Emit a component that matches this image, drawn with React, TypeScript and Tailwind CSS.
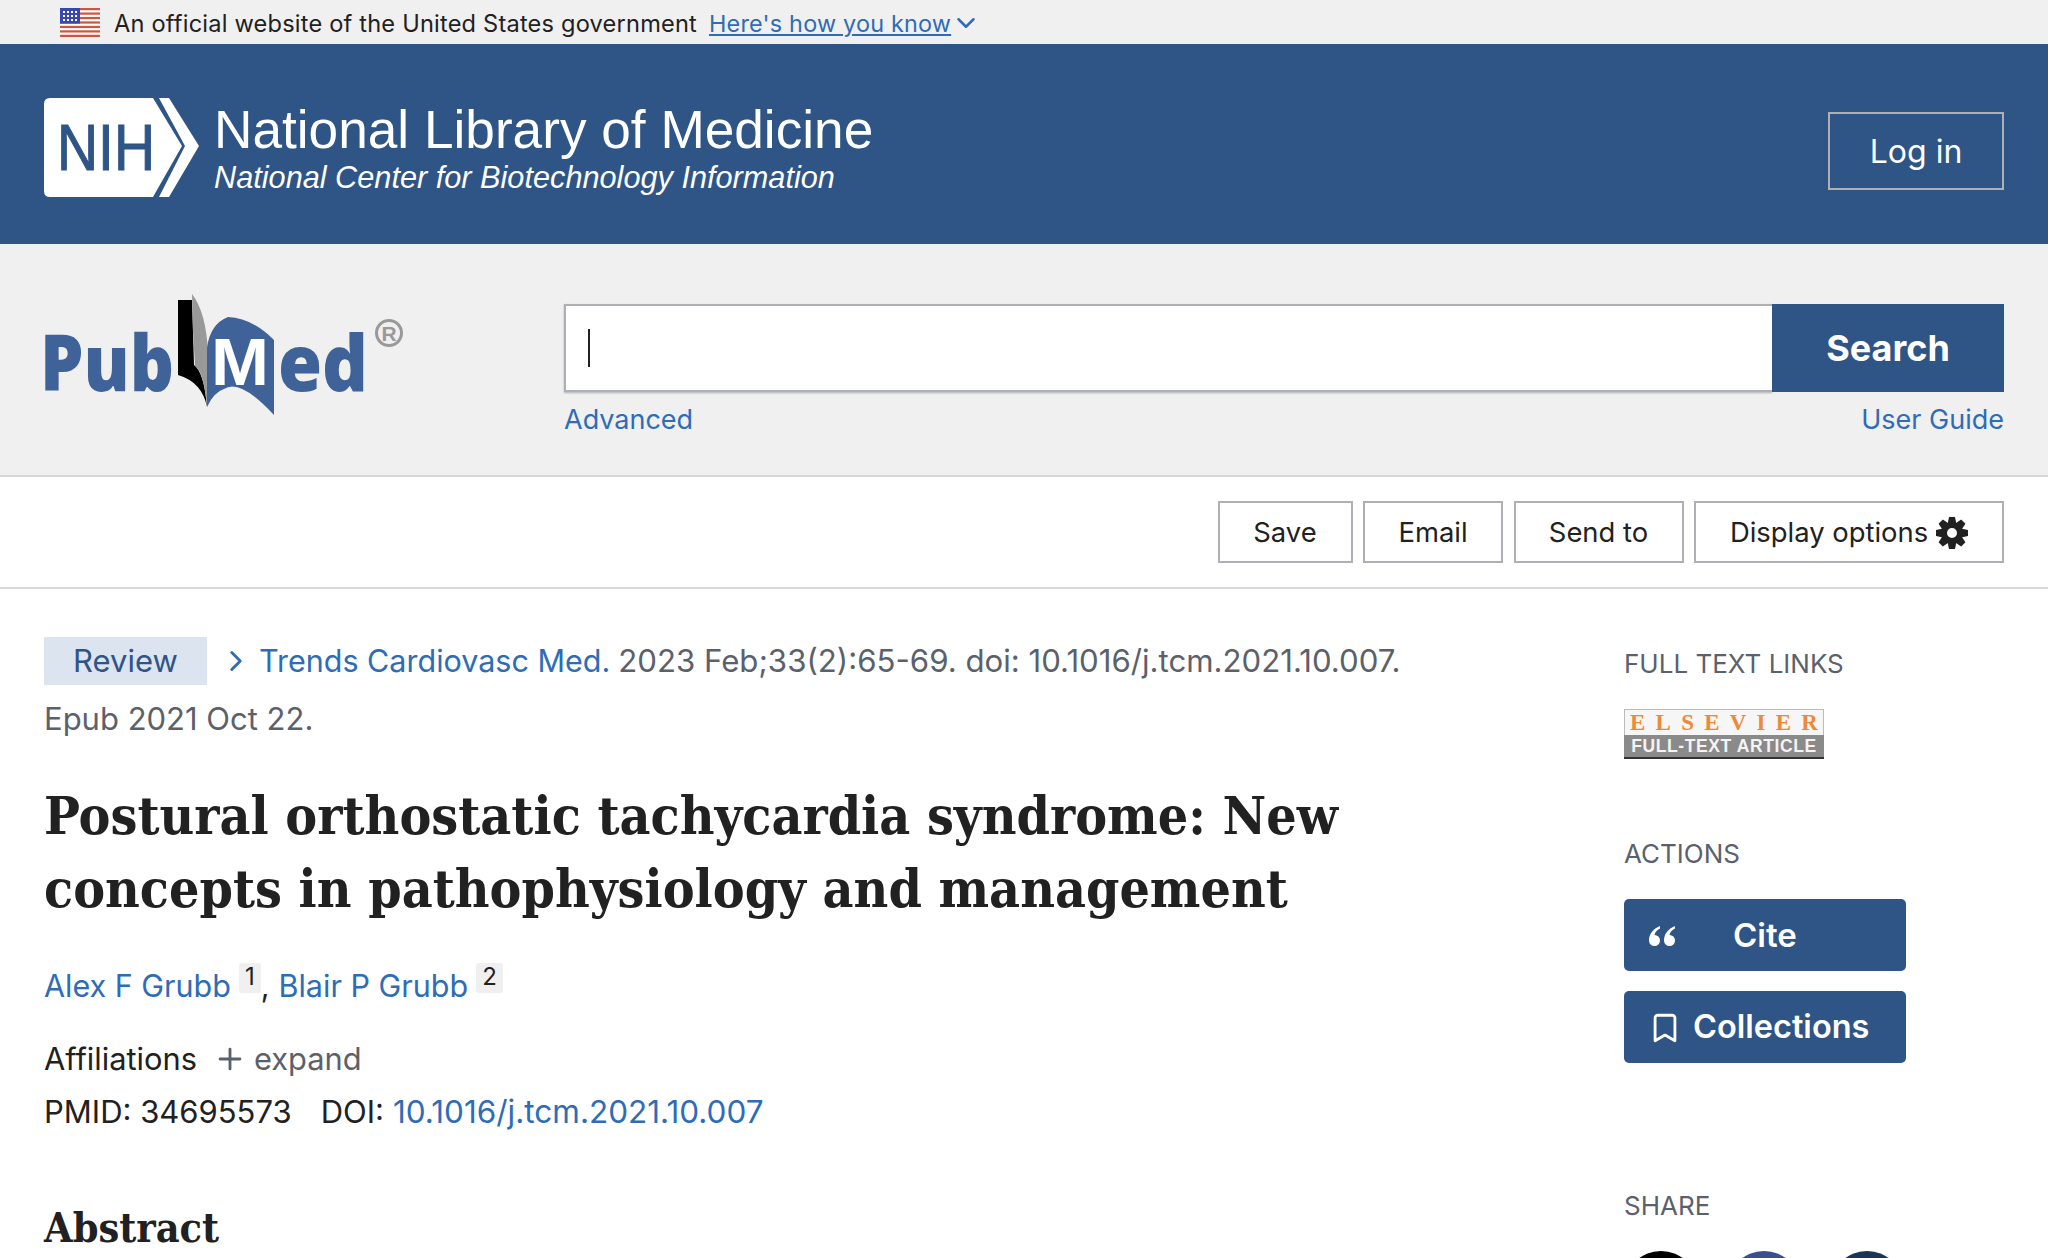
import React from "react";
import { ChevronRight, ChevronDown, Plus, Bookmark } from "lucide-react";

function Flag() {
  return (
    <svg width="40" height="29" viewBox="0 0 40 29" className="shrink-0">
      <rect width="40" height="29" fill="#fff" />
      {[0, 2, 4, 6, 8, 10, 12].map((i) => (
        <rect key={i} y={i * 2.23} width="40" height="2.23" fill="#d0543e" />
      ))}
      <rect width="20" height="15.6" fill="#3a47b0" />
      {[3, 7, 11].map((y) => [3, 7, 11, 15].map((x) => <rect key={`${x}-${y}`} x={x} y={y} width="2" height="2" fill="#fff" />))}
    </svg>
  );
}

function NihLogo() {
  return (
    <svg width="156" height="100" viewBox="0 0 156 100" className="shrink-0">
      <path d="M6 0H109L138 48L109 99H6Q0 99 0 93V6Q0 0 6 0Z" fill="#fff" />
      <path d="M115 0H125L155 48L125 99H115L141 48Z" fill="#fff" />
      <text x="13" y="72" fontFamily="'Liberation Sans', sans-serif" fontWeight="400" fontSize="64" fill="#2f5486" stroke="#2f5486" strokeWidth="1" textLength="98" lengthAdjust="spacingAndGlyphs">NIH</text>
    </svg>
  );
}

function PubMedLogo() {
  return (
    <svg width="376" height="130" viewBox="-6 0 376 130" className="shrink-0 ml-[-6px]">
      <text x="-4" y="101" fontFamily="'Open Sans', sans-serif" fontWeight="800" fontSize="78" fill="#3f6398" textLength="134" lengthAdjust="spacingAndGlyphs">Pub</text>
      <path d="M134 10H148L150 75Q160 82 163 117Q158 92 134 85Z" fill="#000" />
      <path d="M148 4Q162 22 164 62L163 117Q160 82 151 76L149 40Z" fill="#999" />
      <path d="M163 58Q166 34 184 27Q208 28 230 50V125Q196 88 180 99Q170 102 163 117Z" fill="#3f6398" />
      <text x="167" y="95" fontFamily="'Liberation Sans', sans-serif" fontWeight="700" fontSize="66" fill="#fff" textLength="58" lengthAdjust="spacingAndGlyphs">M</text>
      <text x="234" y="101" fontFamily="'Open Sans', sans-serif" fontWeight="800" fontSize="78" fill="#3f6398" textLength="90" lengthAdjust="spacingAndGlyphs">ed</text>
      <circle cx="345" cy="43" r="12.5" fill="none" stroke="#999" strokeWidth="3" />
      <text x="345" y="51" textAnchor="middle" fontFamily="'Liberation Sans', sans-serif" fontWeight="700" fontSize="21" fill="#999">R</text>
    </svg>
  );
}

function Gear() {
  return (
    <svg width="32" height="32" viewBox="0 0 32 32" className="shrink-0">
      {[0, 45, 90, 135, 180, 225, 270, 315].map((a) => (
        <path key={a} d="M13 0H19L20.4 7H11.6Z" fill="#212121" transform={`rotate(${a} 16 16)`} />
      ))}
      <circle cx="16" cy="16" r="7.6" fill="none" stroke="#212121" strokeWidth="5.2" />
    </svg>
  );
}

function QuoteIcon() {
  const d = "M12 1C5 4 1 9 1 15.5A5.5 5.5 0 1 0 6.5 10C7 7 9 5 12 3.5Z";
  return (
    <svg width="28" height="22" viewBox="0 0 28 22" fill="#fff" className="shrink-0">
      <path d={d} />
      <path d={d} transform="translate(15 0)" />
    </svg>
  );
}

function ToolButton({ children, w }: { children: React.ReactNode; w: string }) {
  return (
    <button className={`h-[62px] ${w} flex items-center justify-center gap-[8px] border-2 border-[#aeb0b5] bg-white text-[#212121] text-[27.4px] pt-[1px]`}>
      {children}
    </button>
  );
}

function SideHeading({ children }: { children: React.ReactNode }) {
  return <h3 className="text-[26px] leading-[32px] text-[#5b616b]">{children}</h3>;
}

export default function App() {
  return (
    <div className="h-[1258px] w-[2048px] overflow-hidden bg-white font-['Inter',sans-serif] text-[#212121]">
      <div className="h-[44px] bg-[#f0f0f0] pl-[60px] flex items-center">
        <Flag />
        <span className="ml-[14px] text-[23.6px] leading-[44px] pt-[3px] tracking-[0.2px] text-[#212121]">An official website of the United States government</span>
        <a className="ml-[12px] text-[23.4px] leading-[44px] pt-[3px] tracking-[0.2px] text-[#2e6cb8] underline">Here's how you know</a>
        <ChevronDown className="text-[#2e6cb8] mt-[1px]" size={30} strokeWidth={2} />
      </div>

      <header className="h-[200px] bg-[#2f5486] pl-[44px] pr-[44px] flex justify-between">
        <div className="flex items-start gap-[14px] pt-[54px]">
          <NihLogo />
          <div className="text-white pt-[2px]">
            <div className="font-['Liberation_Sans',sans-serif] text-[53.2px] leading-[60px]">National Library of Medicine</div>
            <div className="font-['Liberation_Sans',sans-serif] text-[30.7px] leading-[36px] italic">National Center for Biotechnology Information</div>
          </div>
        </div>
        <button className="mt-[68px] w-[176px] h-[78px] border-2 border-[#aeb0b5] text-white text-[32px] pt-[2px]">Log in</button>
      </header>

      <section className="h-[233px] bg-[#f0f0f0] border-b-2 border-[#d6d7d9] pl-[44px] pr-[44px] flex">
        <div className="w-[520px] pt-[46px]">
          <PubMedLogo />
        </div>
        <div className="flex-1 pt-[60px]">
          <div className="flex h-[88px]">
            <div className="flex-1 bg-white border-2 border-[#aeb0b5] border-r-0 shadow-[0_1px_2px_#aeb0b5] flex items-center pl-[22px]">
              <div className="w-[2px] h-[38px] bg-[#212121]" />
            </div>
            <button className="w-[232px] bg-[#2f5486] text-white text-[36px] font-bold">Search</button>
          </div>
          <div className="flex justify-between mt-[10px] text-[27px] leading-[36px] text-[#2e6cb8]">
            <a>Advanced</a>
            <a>User Guide</a>
          </div>
        </div>
      </section>

      <nav className="h-[112px] border-b-2 border-[#d6d7d9] pr-[44px] flex justify-end items-center gap-[10.5px]">
        <ToolButton w="w-[135px]">Save</ToolButton>
        <ToolButton w="w-[140px]">Email</ToolButton>
        <ToolButton w="w-[170px]">Send to</ToolButton>
        <ToolButton w="w-[310px]">
          Display options <Gear />
        </ToolButton>
      </nav>

      <main className="flex pl-[44px]">
        <article className="w-[1580px] pt-[48px]">
          <div className="flex items-center text-[31px] leading-[48px] text-[#5b616b]">
            <span className="w-[163px] h-[48px] bg-[#dce4ef] text-[#2f5486] flex items-center justify-center">Review</span>
            <ChevronRight className="ml-[12px] mr-[6px] text-[#2e6cb8]" size={34} strokeWidth={2} />
            <a className="text-[30.5px] text-[#2e6cb8]">Trends Cardiovasc Med.</a>
            <span className="ml-[8px] text-[31.2px]">2023 Feb;33(2):65-69. doi: 10.1016/j.tcm.2021.10.007.</span>
          </div>
          <div className="text-[31px] leading-[48px] mt-[10px] text-[#5b616b]">Epub 2021 Oct 22.</div>
          <h1 className="w-[1360px] mt-[36px] font-['DejaVu_Serif',serif] font-bold [font-stretch:condensed] text-[53.2px] leading-[73px] text-[#212121]">
            Postural orthostatic tachycardia syndrome: New concepts in pathophysiology and management
          </h1>
          <div className="mt-[30px] h-[52px] flex items-end text-[30.5px] leading-[42px] text-[#2e6cb8]">
            <a>Alex F Grubb</a>
            <span className="ml-[8px] mb-[14px] px-[6px] h-[30px] rounded-[3px] bg-[#f0f0f0] text-[#212121] text-[24px] leading-[28px]">1</span>
            <span className="text-[#212121]">,</span>
            <a className="ml-[9px]">Blair P Grubb</a>
            <span className="ml-[8px] mb-[14px] px-[6px] h-[30px] rounded-[3px] bg-[#f0f0f0] text-[#212121] text-[24px] leading-[28px]">2</span>
          </div>
          <div className="mt-[30px] flex items-center text-[30.8px] leading-[44px]">
            <span>Affiliations</span>
            <Plus className="ml-[16px] text-[#5b616b]" size={34} strokeWidth={2} />
            <span className="ml-[7px] text-[#5b616b]">expand</span>
          </div>
          <div className="mt-[9px] flex text-[31px] leading-[44px]">
            <span>PMID: 34695573</span>
            <span className="ml-[29px]">DOI:</span>
            <a className="ml-[9px] text-[31.5px] text-[#2e6cb8]">10.1016/j.tcm.2021.10.007</a>
          </div>
          <h2 className="mt-[66px] font-['DejaVu_Serif',serif] font-bold [font-stretch:condensed] text-[41px] leading-[56px] text-[#212121]">Abstract</h2>
        </article>

        <aside className="pt-[59px]">
          <SideHeading>FULL TEXT LINKS</SideHeading>
          <div className="mt-[29px] w-[200px] h-[50px] flex flex-col overflow-hidden">
            <div className="h-[26px] bg-[#f6f6f6] border border-[#bbb] border-b-0 flex justify-between items-center px-[5px] font-['Liberation_Serif',serif] text-[#ee8a37] text-[23px] font-bold leading-[25px]">
              {"ELSEVIER".split("").map((c, i) => <span key={i}>{c}</span>)}
            </div>
            <div className="h-[24px] bg-[#8a8a8a] border-b-2 border-[#333] flex items-center justify-center font-['Liberation_Sans',sans-serif] text-[#f4f4f4] text-[17.5px] font-bold tracking-[0.6px] leading-[22px] whitespace-nowrap">
              FULL-TEXT ARTICLE
            </div>
          </div>
          <div className="mt-[79px]"><SideHeading>ACTIONS</SideHeading></div>
          <button className="mt-[29px] w-[282px] h-[72px] rounded-[5px] bg-[#2f5486] text-white text-[33px] font-semibold flex items-center pl-[24px] pt-[1px]">
            <QuoteIcon />
            <span className="ml-[57px]">Cite</span>
          </button>
          <button className="mt-[20px] w-[282px] h-[72px] rounded-[5px] bg-[#2f5486] text-white text-[32.5px] font-semibold flex items-center pl-[24px] pt-[1px]">
            <Bookmark size={34} strokeWidth={2} />
            <span className="ml-[11px]">Collections</span>
          </button>
          <div className="mt-[127px]"><SideHeading>SHARE</SideHeading></div>
          <div className="mt-[29px] flex gap-[29px]">
            <div className="w-[74px] h-[74px] rounded-full bg-black" />
            <div className="w-[74px] h-[74px] rounded-full bg-[#3b4f8f]" />
            <div className="w-[74px] h-[74px] rounded-full bg-[#1a3558]" />
          </div>
        </aside>
      </main>
    </div>
  );
}
